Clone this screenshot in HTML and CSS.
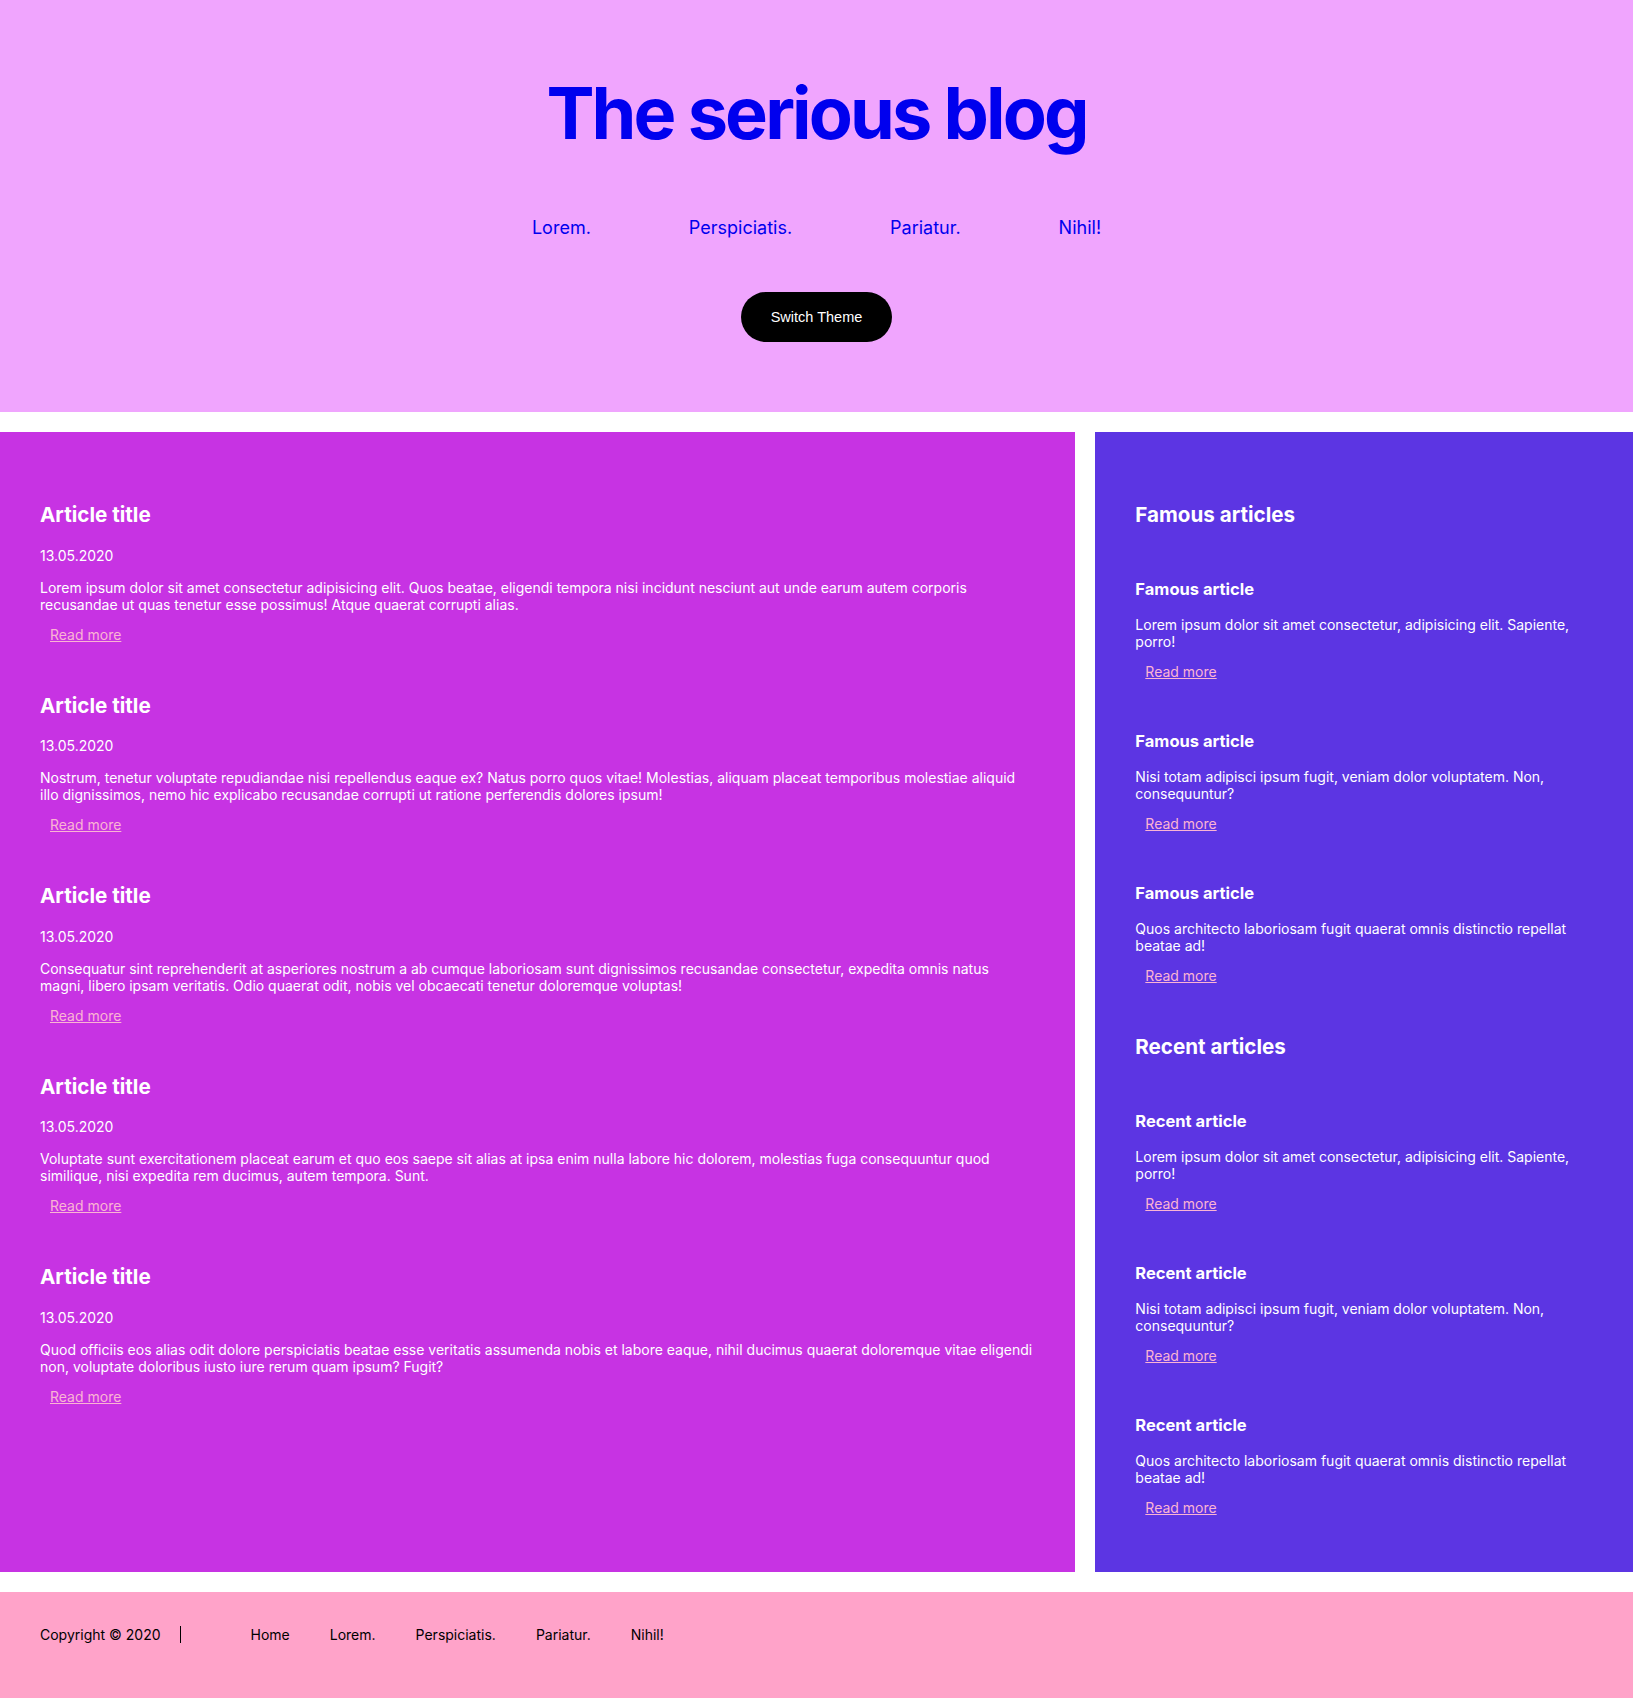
FILE: index.html
```html
<!DOCTYPE html>
<html lang="en">
<head>
<meta charset="utf-8">
<title>The serious blog</title>
<link rel="stylesheet" href="styles.css">
</head>
<body>
<header class="site-header">
  <h1 class="site-title">The serious blog</h1>
  <nav class="top-nav">
    <a href="#">Lorem.</a>
    <a href="#">Perspiciatis.</a>
    <a href="#">Pariatur.</a>
    <a href="#">Nihil!</a>
  </nav>
  <button class="theme-btn" type="button">Switch Theme</button>
</header>

<div class="layout">
  <main class="content">
    <article class="post">
      <h2 class="post-title">Article title</h2>
      <p class="post-date">13.05.2020</p>
      <p class="post-text">Lorem ipsum dolor sit amet consectetur adipisicing elit. Quos beatae, eligendi tempora nisi incidunt nesciunt aut unde earum autem corporis recusandae ut quas tenetur esse possimus! Atque quaerat corrupti alias.</p>
      <a class="read-more" href="#">Read more</a>
    </article>
    <article class="post">
      <h2 class="post-title">Article title</h2>
      <p class="post-date">13.05.2020</p>
      <p class="post-text">Nostrum, tenetur voluptate repudiandae nisi repellendus eaque ex? Natus porro quos vitae! Molestias, aliquam placeat temporibus molestiae aliquid illo dignissimos, nemo hic explicabo recusandae corrupti ut ratione perferendis dolores ipsum!</p>
      <a class="read-more" href="#">Read more</a>
    </article>
    <article class="post">
      <h2 class="post-title">Article title</h2>
      <p class="post-date">13.05.2020</p>
      <p class="post-text">Consequatur sint reprehenderit at asperiores nostrum a ab cumque laboriosam sunt dignissimos recusandae consectetur, expedita omnis natus magni, libero ipsam veritatis. Odio quaerat odit, nobis vel obcaecati tenetur doloremque voluptas!</p>
      <a class="read-more" href="#">Read more</a>
    </article>
    <article class="post">
      <h2 class="post-title">Article title</h2>
      <p class="post-date">13.05.2020</p>
      <p class="post-text">Voluptate sunt exercitationem placeat earum et quo eos saepe sit alias at ipsa enim nulla labore hic dolorem, molestias fuga consequuntur quod similique, nisi expedita rem ducimus, autem tempora. Sunt.</p>
      <a class="read-more" href="#">Read more</a>
    </article>
    <article class="post">
      <h2 class="post-title">Article title</h2>
      <p class="post-date">13.05.2020</p>
      <p class="post-text">Quod officiis eos alias odit dolore perspiciatis beatae esse veritatis assumenda nobis et labore eaque, nihil ducimus quaerat doloremque vitae eligendi non, voluptate doloribus iusto iure rerum quam ipsum? Fugit?</p>
      <a class="read-more" href="#">Read more</a>
    </article>
  </main>

  <aside class="sidebar">
    <h2 class="side-heading">Famous articles</h2>
    <article class="side-post">
      <h3 class="side-title">Famous article</h3>
      <p class="side-text">Lorem ipsum dolor sit amet consectetur, adipisicing elit. Sapiente, porro!</p>
      <a class="read-more" href="#">Read more</a>
    </article>
    <article class="side-post">
      <h3 class="side-title">Famous article</h3>
      <p class="side-text">Nisi totam adipisci ipsum fugit, veniam dolor voluptatem. Non, consequuntur?</p>
      <a class="read-more" href="#">Read more</a>
    </article>
    <article class="side-post">
      <h3 class="side-title">Famous article</h3>
      <p class="side-text">Quos architecto laboriosam fugit quaerat omnis distinctio repellat beatae ad!</p>
      <a class="read-more" href="#">Read more</a>
    </article>

    <h2 class="side-heading">Recent articles</h2>
    <article class="side-post">
      <h3 class="side-title">Recent article</h3>
      <p class="side-text">Lorem ipsum dolor sit amet consectetur, adipisicing elit. Sapiente, porro!</p>
      <a class="read-more" href="#">Read more</a>
    </article>
    <article class="side-post">
      <h3 class="side-title">Recent article</h3>
      <p class="side-text">Nisi totam adipisci ipsum fugit, veniam dolor voluptatem. Non, consequuntur?</p>
      <a class="read-more" href="#">Read more</a>
    </article>
    <article class="side-post">
      <h3 class="side-title">Recent article</h3>
      <p class="side-text">Quos architecto laboriosam fugit quaerat omnis distinctio repellat beatae ad!</p>
      <a class="read-more" href="#">Read more</a>
    </article>
  </aside>
</div>

<footer class="site-footer">
  <span class="copyright">Copyright © 2020</span>
  <nav class="footer-nav">
    <a href="#">Home</a>
    <a href="#">Lorem.</a>
    <a href="#">Perspiciatis.</a>
    <a href="#">Pariatur.</a>
    <a href="#">Nihil!</a>
  </nav>
</footer>
</body>
</html>
```

FILE: styles.css
```css
* {
  box-sizing: border-box;
}

html, body {
  margin: 0;
  padding: 0;
  background: #ffffff;
}

body {
  font-family: Inter, "Noto Sans", "Liberation Sans", sans-serif;
  font-size: 14px;
  color: #ffffff;
}

.site-header {
  height: 412px;
  background: #f0a5fe;
  display: flex;
  flex-direction: column;
  align-items: center;
  padding-top: 69px;
}

.site-title {
  margin: 0;
  font-size: 72px;
  line-height: 87px;
  font-weight: 700;
  letter-spacing: -0.04em;
  color: #0000ee;
}

.top-nav {
  display: flex;
  gap: 98px;
  margin-top: 61px;
}

.top-nav a {
  font-size: 18px;
  line-height: 22px;
  color: #0000ee;
  text-decoration: none;
}

.theme-btn {
  margin-top: 53px;
  height: 50px;
  padding: 0 30px;
  border: none;
  border-radius: 25px;
  background: #000000;
  color: #ffffff;
  font-family: "Liberation Sans", Arial, sans-serif;
  font-size: 14.5px;
  cursor: pointer;
}

.layout {
  display: grid;
  grid-template-columns: 2fr 1fr;
  gap: 20px;
  margin-top: 20px;
}

.content {
  background: #c733e3;
  padding: 71px 40px 40px;
}

.sidebar {
  background: #5c35e3;
  padding: 71px 40px 5px;
}

.post {
  margin-bottom: 51px;
}

.post-title {
  margin: 0 0 19.6px;
  font-size: 20.6px;
  line-height: 24px;
  font-weight: 700;
}

.post-date {
  margin: 0 0 15px;
  line-height: 17px;
}

.post-text {
  margin: 0 0 13px;
  line-height: 17px;
}

.read-more {
  display: inline-block;
  margin-left: 10px;
  line-height: 17px;
  color: #fbb4d3;
  text-decoration: underline;
}

.side-heading {
  margin: 0 0 52px;
  font-size: 20.6px;
  line-height: 24px;
  font-weight: 700;
}

.side-post {
  margin-bottom: 51px;
}

.side-title {
  margin: 0 0 17px;
  font-size: 16.5px;
  line-height: 20px;
  font-weight: 700;
}

.side-text {
  margin: 0 0 13px;
  line-height: 17px;
}

.site-footer {
  margin-top: 20px;
  height: 106px;
  background: #ffa3c9;
  display: flex;
  align-items: flex-start;
  padding: 34px 40px 0;
  color: #000000;
}

.copyright {
  line-height: 17px;
  padding-right: 19px;
  border-right: 1px solid #000000;
}

.footer-nav {
  display: flex;
  gap: 40px;
  margin-left: 70px;
}

.footer-nav a {
  line-height: 17px;
  color: #000000;
  text-decoration: none;
}
```
